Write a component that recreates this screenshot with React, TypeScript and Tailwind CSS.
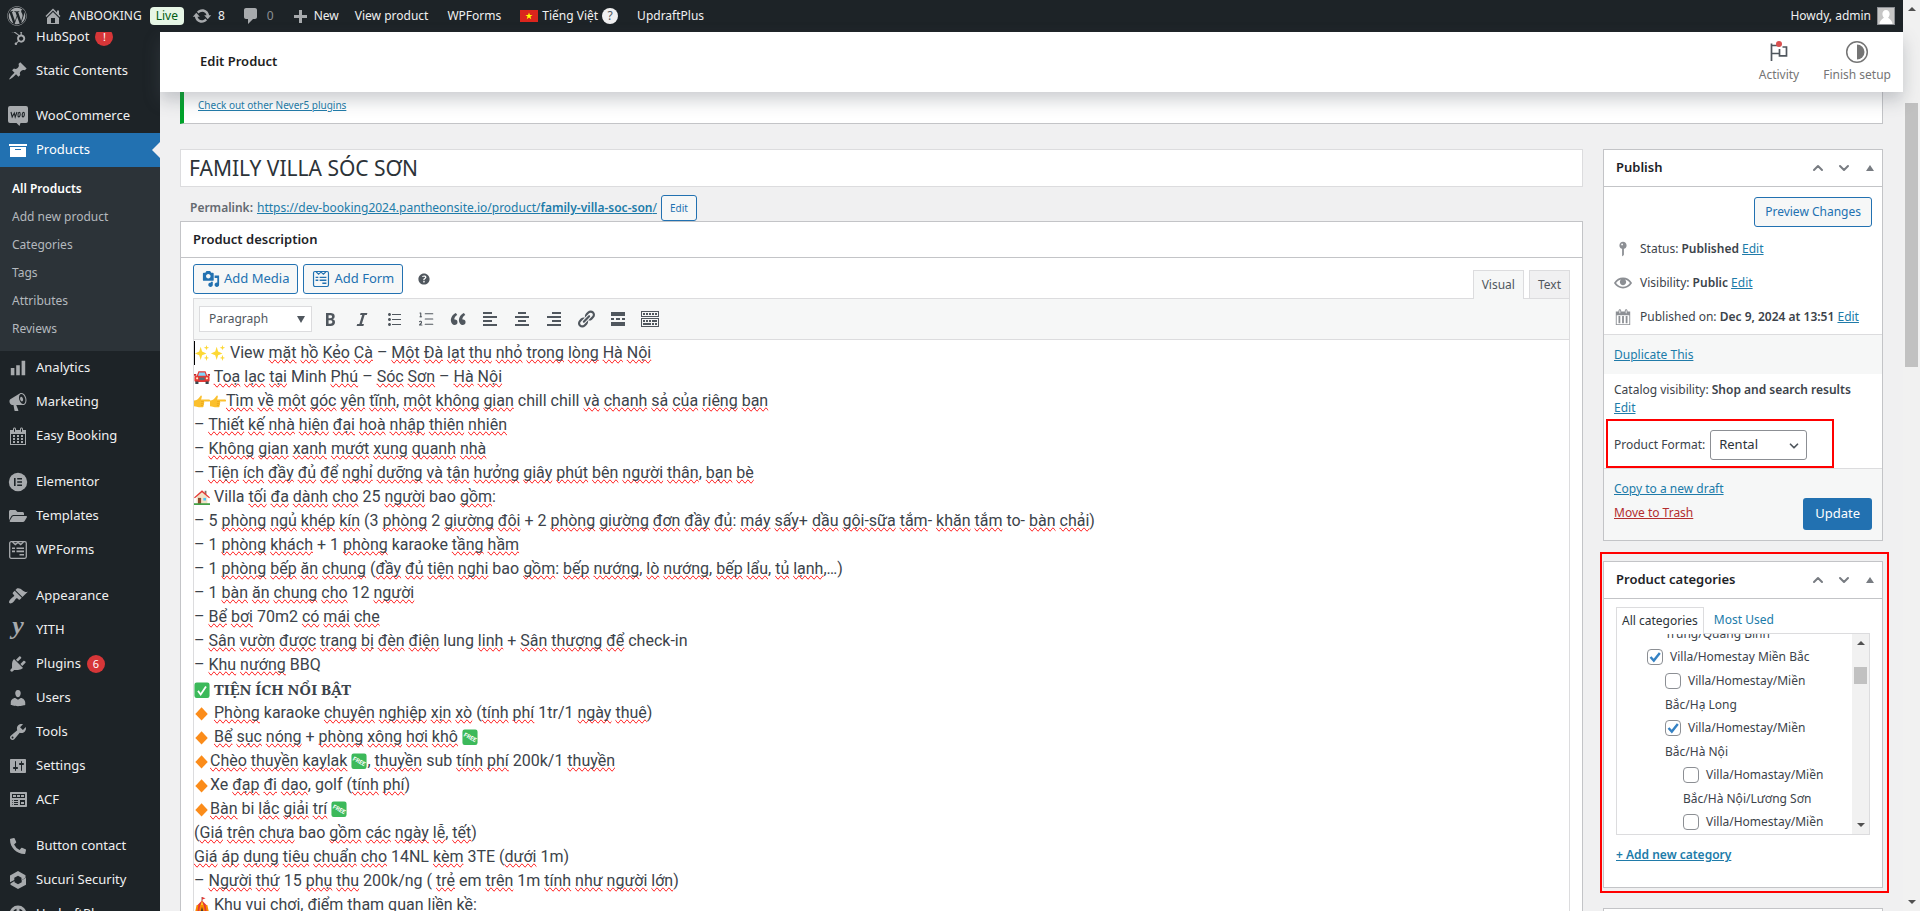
import React, { useState } from 'react';
import { FaWordpress, FaHubspot, FaFolderOpen, FaPhoneAlt } from 'react-icons/fa';
import { ChevronDown, ChevronUp, ListOrdered } from 'lucide-react';

const ICONS = {
  home: 'M16 8.5l1.53 1.53-1.06 1.06L10 4.6l-6.47 6.49-1.06-1.06L10 2.5l4 4v-2h2v4zm-6-2.46l6 5.99V18H4v-5.97zM12 17v-5H8v5h4z',
  update: 'M10.2 3.28c3.53 0 6.43 2.61 6.92 6h2.08l-3.5 4-3.5-4h2.32c-.45-1.97-2.21-3.45-4.32-3.45-1.45 0-2.73.71-3.54 1.78L4.95 5.66C6.23 4.2 8.11 3.28 10.2 3.28zm-.4 13.44c-3.52 0-6.43-2.61-6.92-6H.8l3.5-4c1.17 1.33 2.33 2.67 3.5 4H5.48c.45 1.97 2.21 3.45 4.32 3.45 1.45 0 2.73-.71 3.54-1.78l1.71 1.95c-1.28 1.46-3.15 2.38-5.25 2.38z',
  comments: 'M5 2h9c1.1 0 2 .9 2 2v7c0 1.1-.9 2-2 2h-2l-5 5v-5H5c-1.1 0-2-.9-2-2V4c0-1.1.9-2 2-2z',
  plus: 'M17 7v3h-5v5H9v-5H4V7h5V2h3v5h5z',
  pin: 'M10.44 3.02l1.82-1.82 6.36 6.35-1.83 1.82c-1.05-.68-2.48-.57-3.41.36l-.75.75c-.92.93-1.04 2.35-.35 3.41l-1.83 1.82-2.41-2.41-2.8 2.79c-.42.42-3.38 2.71-3.8 2.29s1.86-3.39 2.28-3.81l2.79-2.79L4.1 9.36l1.83-1.82c1.05.69 2.48.57 3.4-.36l.75-.75c.93-.92 1.05-2.35.36-3.41z',
  archive: 'M19 4v2H1V4h18zM2 7h16v10H2V7zm11 3V9H7v1h6z',
  chart: 'M18 18V2h-4v16h4zm-6 0V7H8v11h4zm-6 0v-8H2v8h4z',
  megaphone: 'M18.15 5.94c.46 1.62.38 3.22-.02 4.48-.42 1.28-1.26 2.18-2.3 2.48-.16.06-.26.06-.4.06-.06.02-.12.02-.18.02-.06.02-.14.02-.22.02h-6.8l2.22 5.5c.02.14-.06.26-.14.34-.08.1-.24.16-.34.16H6.95c-.1 0-.26-.06-.34-.16-.08-.08-.16-.2-.14-.34l-1-5.5H4.25l-.02-.02c-.5.06-1.08-.18-1.54-.62s-.88-1.08-1.06-1.88c-.24-.8-.2-1.56-.02-2.2.18-.62.58-1.08 1.06-1.3l.02-.02 9-5.4c.1-.06.18-.1.24-.16.06-.04.14-.08.24-.12.16-.08.28-.12.5-.18 1.04-.3 2.24.1 3.22.98s1.84 2.24 2.26 3.86zm-2.58 5.98h-.02c.4-.1.74-.34 1.04-.7.58-.7.86-1.76.86-3.04 0-.64-.1-1.3-.28-1.98-.34-1.36-1.02-2.5-1.78-3.24s-1.68-1.1-2.46-.88c-.82.22-1.4.96-1.7 2-.32 1.04-.28 2.36.06 3.72.38 1.36 1 2.5 1.8 3.24.78.74 1.62 1.1 2.48.88zm-2.54-7.08c.22-.04.42-.02.62.04.38.16.76.48 1.02 1s.42 1.2.42 1.78c0 .3-.04.56-.12.8-.18.48-.44.84-.86.94-.34.1-.8-.06-1.14-.4s-.64-.86-.78-1.5c-.18-.62-.12-1.24.02-1.72s.48-.84.82-.94z',
  calendar: 'M15 4h3v15H2V4h3V3c0-.41.15-.76.44-1.06.29-.29.65-.44 1.06-.44s.77.15 1.06.44c.29.3.44.65.44 1.06v1h4V3c0-.41.15-.76.44-1.06.29-.29.65-.44 1.06-.44s.77.15 1.06.44c.29.3.44.65.44 1.06v1zM6 3v2.5c0 .14.05.26.15.36.09.09.21.14.35.14s.26-.05.35-.14c.1-.1.15-.22.15-.36V3c0-.14-.05-.26-.15-.35-.09-.1-.21-.15-.35-.15s-.26.05-.35.15c-.1.09-.15.21-.15.35zm7 0v2.5c0 .14.05.26.14.36.1.09.22.14.36.14s.26-.05.36-.14c.09-.1.14-.22.14-.36V3c0-.14-.05-.26-.14-.35-.1-.1-.22-.15-.36-.15s-.26.05-.36.15c-.09.09-.14.21-.14.35zm4 15V8H3v10h14zM7 9v2H5V9h2zm2 0h2v2H9V9zm4 2V9h2v2h-2zm-6 1v2H5v-2h2zm2 0h2v2H9v-2zm4 2v-2h2v2h-2zm-6 1v2H5v-2h2zm4 2H9v-2h2v2zm4 0h-2v-2h2v2z',
  calendarBars: 'M15 4h3v15H2V4h3V3c0-.41.15-.76.44-1.06.29-.29.65-.44 1.06-.44s.77.15 1.06.44c.29.3.44.65.44 1.06v1h4V3c0-.41.15-.76.44-1.06.29-.29.65-.44 1.06-.44s.77.15 1.06.44c.29.3.44.65.44 1.06v1zM6 3v2.5c0 .14.05.26.15.36.09.09.21.14.35.14s.26-.05.35-.14c.1-.1.15-.22.15-.36V3c0-.14-.05-.26-.15-.35-.09-.1-.21-.15-.35-.15s-.26.05-.35.15c-.1.09-.15.21-.15.35zm7 0v2.5c0 .14.05.26.14.36.1.09.22.14.36.14s.26-.05.36-.14c.09-.1.14-.22.14-.36V3c0-.14-.05-.26-.14-.35-.1-.1-.22-.15-.36-.15s-.26.05-.36.15c-.09.09-.14.21-.14.35zm4 15V8H3v10h14zM7 9v8H5V9h2zm4 0v8H9V9h2zm4 0v8h-2V9h2z',
  appearance: 'M14.48 11.06L7.41 3.99l1.5-1.5c.5-.56 2.3-.47 3.51.32 1.21.8 1.43 1.28 2.91 2.1 1.18.64 2.45 1.26 4.45.85zm-.71.71L6.7 4.7 4.93 6.47c-.39.39-.39 1.02 0 1.41l1.06 1.06c.39.39.39 1.03 0 1.42-.6.6-1.43 1.11-2.21 1.69-.35.26-.7.53-1.01.84C1.43 14.23.4 16.08 1.4 17.07c.99 1 2.84-.03 4.18-1.36.31-.31.58-.66.85-1.02.57-.78 1.08-1.61 1.69-2.21.39-.39 1.02-.39 1.41 0l1.06 1.06c.39.39 1.02.39 1.41 0z',
  plugins: 'M13.11 4.36L9.87 7.6 8 5.73l3.24-3.24c.35-.34 1.05-.2 1.56.32.52.51.66 1.21.31 1.55zm-8 1.77l.91-1.12 9.01 9.01-1.19.84c-.71.71-2.63 1.16-3.82 1.16H6.14L4.9 17.26c-.59.59-1.54.59-2.12 0-.59-.58-.59-1.53 0-2.12l1.24-1.24v-3.88c0-1.13.4-3.19 1.09-3.89zm7.26 3.97l3.24-3.24c.34-.35 1.04-.21 1.55.31.52.51.66 1.21.31 1.55l-3.24 3.25z',
  users: 'M10 9.25c-2.27 0-2.73-3.44-2.73-3.44C7 4.02 7.82 2 9.97 2c2.16 0 2.98 2.02 2.71 3.81 0 0-.41 3.44-2.68 3.44zm0 2.57L12.72 10c2.39 0 4.52 2.33 4.52 4.53v2.49s-3.65 1.13-7.24 1.13c-3.65 0-7.24-1.13-7.24-1.13v-2.49c0-2.25 1.94-4.48 4.47-4.48z',
  tools: 'M16.68 9.77c-1.34 1.34-3.3 1.67-4.95.99l-5.41 6.52c-.99.99-2.59.99-3.58 0s-.99-2.59 0-3.57l6.52-5.42c-.68-1.65-.35-3.61.99-4.95 1.28-1.28 3.12-1.62 4.72-1.06l-2.89 2.89 2.82 2.82 2.86-2.87c.53 1.58.18 3.39-1.08 4.65zM3.81 16.21c.4.39 1.04.39 1.43 0 .4-.4.4-1.04 0-1.43-.39-.4-1.03-.4-1.43 0-.39.39-.39 1.03 0 1.43z',
  settings: 'M18 16V4c0-.55-.45-1-1-1H3c-.55 0-1 .45-1 1v12c0 .55.45 1 1 1h14c.55 0 1-.45 1-1zM8 11h1c.55 0 1 .45 1 1s-.45 1-1 1H8v1.5c0 .28-.22.5-.5.5s-.5-.22-.5-.5V13H6c-.55 0-1-.45-1-1s.45-1 1-1h1V5.5c0-.28.22-.5.5-.5s.5.22.5.5V11zm5-2h-1c-.55 0-1-.45-1-1s.45-1 1-1h1V5.5c0-.28.22-.5.5-.5s.5.22.5.5V7h1c.55 0 1 .45 1 1s-.45 1-1 1h-1v5.5c0 .28-.22.5-.5.5s-.5-.22-.5-.5V9z',
  widgets: 'M19 16V3c0-.55-.45-1-1-1H3c-.55 0-1 .45-1 1v13c0 .55.45 1 1 1h15c.55 0 1-.45 1-1zM4 4h13v4H4V4zm1 1v2h3V5H5zm4 0v2h3V5H9zm4 0v2h3V5h-3zm-8.5 5c.28 0 .5.22.5.5s-.22.5-.5.5-.5-.22-.5-.5.22-.5.5-.5zM6 10h4v1H6v-1zm6 0h5v5h-5v-5zm-7.5 2c.28 0 .5.22.5.5s-.22.5-.5.5-.5-.22-.5-.5.22-.5.5-.5zM6 12h4v1H6v-1zm7 0v2h3v-2h-3zm-8.5 2c.28 0 .5.22.5.5s-.22.5-.5.5-.5-.22-.5-.5.22-.5.5-.5zM6 14h4v1H6v-1z',
  media: 'M13 11V4c0-.55-.45-1-1-1h-1.67L9 1H5L3.67 3H2c-.55 0-1 .45-1 1v7c0 .55.45 1 1 1h10c.55 0 1-.45 1-1zM7 4.5c1.38 0 2.5 1.12 2.5 2.5S8.38 9.5 7 9.5 4.5 8.38 4.5 7 5.62 4.5 7 4.5zM14 6h5v10.5c0 1.38-1.12 2.5-2.5 2.5S14 17.88 14 16.5s1.12-2.5 2.5-2.5c.17 0 .34.02.5.05V9h-3V6zm-4 8.05V13h2v3.5c0 1.38-1.12 2.5-2.5 2.5S7 17.88 7 16.5 8.12 14 9.5 14c.17 0 .34.02.5.05z',
  help: 'M17 10c0-3.87-3.14-7-7-7-3.87 0-7 3.13-7 7s3.13 7 7 7c3.86 0 7-3.13 7-7zm-6.3 1.48H9.14v-.43c0-.38.08-.7.24-.98s.46-.57.88-.89c.41-.29.68-.53.81-.71.14-.18.2-.39.2-.62 0-.25-.09-.44-.28-.58-.19-.13-.45-.19-.79-.19-.58 0-1.25.19-2 .57l-.64-1.28c.87-.49 1.8-.74 2.77-.74.81 0 1.45.2 1.92.58.48.39.71.91.71 1.55 0 .43-.09.8-.29 1.11-.19.32-.57.67-1.11 1.06-.38.28-.61.49-.71.63-.1.15-.15.34-.15.57v.35zm-1.47 2.74c-.18-.17-.27-.42-.27-.73 0-.33.08-.58.26-.75s.43-.25.77-.25c.32 0 .57.09.75.26s.27.42.27.74c0 .3-.09.55-.27.72-.18.18-.43.27-.75.27-.33 0-.58-.09-.76-.26z',
  bold: 'M6 4v13h4.54c1.37 0 2.46-.33 3.26-1 .8-.66 1.2-1.58 1.2-2.77 0-.84-.17-1.51-.51-2.01s-.9-.85-1.67-1.03v-.09c.57-.1 1.02-.4 1.36-.9s.51-1.13.51-1.91c0-1.14-.39-1.98-1.17-2.5C12.75 4.26 11.5 4 9.78 4H6zm2.57 5.15V6.26h1.36c.73 0 1.27.11 1.61.32.34.22.51.58.51 1.07 0 .54-.16.92-.47 1.15s-.82.35-1.51.35h-1.5zm0 2.19h1.6c1.44 0 2.16.53 2.16 1.61 0 .6-.17 1.05-.51 1.34s-.86.43-1.57.43H8.57v-3.38z',
  italic: 'M14.78 6h-2.13l-2.8 9h2.12l-.62 2H4.6l.62-2h2.14l2.8-9H8.03l.62-2h6.75z',
  ul: 'M5.5 7C4.67 7 4 6.33 4 5.5 4 4.68 4.67 4 5.5 4 6.32 4 7 4.68 7 5.5 7 6.33 6.32 7 5.5 7zM8 5h9v1H8V5zm-2.500 7c-.83 0-1.500-.67-1.500-1.500C4 9.680 4.670 9 5.500 9c.82 0 1.500.68 1.500 1.500 0 .83-.68 1.500-1.500 1.500zM8 10h9v1H8v-1zm-2.500 7c-.83 0-1.500-.67-1.500-1.500 0-.82.67-1.500 1.500-1.500.82 0 1.500.68 1.500 1.500 0 .83-.68 1.500-1.500 1.500zM8 15h9v1H8v-1z',
  quote: 'M9.49 13.22c0-.74-.2-1.38-.61-1.9-.62-.78-1.83-.88-2.53-.72-.29-1.65 1.11-3.75 2.92-4.65L7.88 4c-2.73 1.3-5.42 4.28-4.96 8.05C3.21 14.43 4.59 16 6.54 16c.85 0 1.56-.25 2.12-.75s.83-1.18.83-2.03zm8.05 0c0-.74-.2-1.38-.61-1.9-.63-.78-1.83-.88-2.53-.72-.29-1.65 1.11-3.75 2.92-4.65L15.93 4c-2.73 1.3-5.41 4.28-4.95 8.05.29 2.38 1.66 3.95 3.61 3.95.85 0 1.56-.25 2.12-.75s.83-1.18.83-2.03z',
  alignLeft: 'M12 5V3H3v2h9zm5 4V7H3v2h14zm-5 4v-2H3v2h9zm5 4v-2H3v2h14z',
  alignCenter: 'M14 5V3H6v2h8zm3 4V7H3v2h14zm-3 4v-2H6v2h8zm3 4v-2H3v2h14z',
  alignRight: 'M17 5V3H8v2h9zm0 4V7H3v2h14zm0 4v-2H8v2h9zm0 4v-2H3v2h14z',
  link: 'M17.74 2.76c1.68 1.69 1.68 4.41 0 6.1l-1.53 1.52c-1.12 1.12-2.7 1.47-4.14 1.09l2.62-2.61.76-.77.76-.76c.84-.84.84-2.2 0-3.04-.84-.85-2.2-.85-3.04 0l-.77.76-3.38 3.38c-.37-1.44-.02-3.02 1.1-4.14l1.52-1.53c1.69-1.68 4.42-1.68 6.1 0zM8.59 13.43l5.34-5.34c.42-.42.42-1.1 0-1.52-.44-.43-1.13-.39-1.53 0l-5.33 5.34c-.42.42-.42 1.1 0 1.52.44.43 1.13.39 1.52 0zm-.76 2.29l4.14-4.15c.38 1.44.03 3.02-1.09 4.14l-1.52 1.53c-1.69 1.68-4.41 1.68-6.1 0-1.68-1.68-1.68-4.42 0-6.1l1.53-1.52c1.12-1.12 2.7-1.47 4.14-1.1l-4.14 4.15c-.85.84-.85 2.2 0 3.05.84.84 2.2.84 3.04 0z',
  more: 'M17 7V3H3v4h14zM6 11V9H3v2h3zm6 0V9H8v2h4zm5 0V9h-3v2h3zm0 6v-4H3v4h14z',
  kitchenSink: 'M19 2v6H1V2h18zm-1 5V3H2v4h16zM5 4v2H3V4h2zm3 0v2H6V4h2zm3 0v2H9V4h2zm3 0v2h-2V4h2zm3 0v2h-2V4h2zm2 5v9H1V9h18zm-1 8v-7H2v7h16zM5 11v2H3v-2h2zm3 0v2H6v-2h2zm3 0v2H9v-2h2zm6 0v2h-5v-2h5zm-6 3v2H3v-2h8zm3 0v2h-2v-2h2zm3 0v2h-2v-2h2z',
  visibility: 'M19.7 9.4C17.7 6 14 3.9 10 3.9S2.3 6 .3 9.4L0 10l.3.6c2 3.4 5.7 5.5 9.7 5.5s7.7-2.1 9.7-5.5l.3-.6-.3-.6zM10 14.1c-3.1 0-6-1.6-7.7-4.1C3.6 8 5.7 6.6 8 6.1c-.9.6-1.5 1.7-1.5 2.9 0 1.9 1.6 3.5 3.5 3.5s3.5-1.6 3.5-3.5c0-1.2-.6-2.3-1.5-2.9 2.3.5 4.4 1.9 5.7 3.9-1.7 2.5-4.6 4.1-7.7 4.1z',
  status: 'M14 6c0 1.86-1.28 3.41-3 3.86V16c0 1-2 2-2 2V9.86c-1.72-.45-3-2-3-3.86 0-2.21 1.79-4 4-4s4 1.79 4 4zM8 5c0 .55.45 1 1 1s1-.45 1-1-.45-1-1-1-1 .45-1 1z',
};

type IconName = keyof typeof ICONS;

const Dashicon: React.FC<{ name: IconName; className?: string }> = ({ name, className = 'w-5 h-5' }) => (
  <svg viewBox="0 0 20 20" className={`shrink-0 ${className}`} fill="currentColor" aria-hidden="true">
    <path d={ICONS[name]} />
  </svg>
);

const FormIcon: React.FC<{ className?: string }> = ({ className = 'w-5 h-5' }) => (
  <svg viewBox="0 0 20 20" className={`shrink-0 ${className}`} fill="none" stroke="currentColor" strokeWidth="1.3" aria-hidden="true">
    <rect x="1.7" y="1.7" width="16.6" height="16.6" rx="1.5" />
    <path d="M4.5 2l2.8 2.6L10 2.4l2.7 2.2L15.5 2" />
    <path d="M4 8.2h3M8.5 8.2H16M4 11.4h3M8.5 11.4H16M11.5 14.8H16" strokeWidth="1.6" />
  </svg>
);

const WooIcon = () => (
  <svg viewBox="0 0 20 20" className="w-5 h-5 shrink-0" aria-hidden="true">
    <path d="M2 0h16a2 2 0 0 1 2 2v13a2 2 0 0 1-2 2h-5.5l-1 3-3-3H2a2 2 0 0 1-2-2V2a2 2 0 0 1 2-2z" fill="#a7aaad" />
    <path d="M3 6l1.2 5L6.3 7l.9 4L9 6M11.3 6.3c-1.4 0-1.9 4.4-.5 4.6s2-4.4.5-4.6zM15.500 6.300c-1.400 0-1.900 4.400-.5 4.600s2-4.400.5-4.600z" fill="none" stroke="#1d2327" strokeWidth="1.1" />
  </svg>
);

const ElementorIcon = () => (
  <svg viewBox="0 0 20 20" className="w-5 h-5 shrink-0" aria-hidden="true">
    <circle cx="10" cy="10" r="9.2" fill="currentColor" />
    <path d="M6 6h1.6v8H6zM9.2 6H14v1.6H9.2zM9.2 9.2H14v1.6H9.2zM9.2 12.4H14V14H9.2z" fill="#1d2327" />
  </svg>
);

const SucuriIcon = () => (
  <svg viewBox="0 0 20 20" className="w-5 h-5 shrink-0" fill="currentColor" aria-hidden="true">
    <path d="M10 1l7.5 4.200v2.600l-4 2.400V7.700L10 5.800 6.300 7.700v2.200L2 12.300V5.500z" />
    <path d="M10 19l-7.500-4.200v-1.300l4-2.500v1.300l3.500 1.900 3.700-1.900v-2l4.300-2.500v6.900z" />
  </svg>
);

const UpdraftIcon = () => (
  <svg viewBox="0 0 20 20" className="w-5 h-5 shrink-0" fill="none" stroke="currentColor" aria-hidden="true">
    <circle cx="10" cy="10" r="7" strokeWidth="3" />
    <path d="M10 4v7h6" strokeWidth="3" />
  </svg>
);

// Little drawings that stand inline in the description text
const EMOJI: Record<string, React.ReactNode> = {
  spark: (
    <g fill="#fdd835">
      <path d="M7.5 3l1.6 5.4 4.900 2.100-4.900 2L7.500 18l-1.600-5.500L1 10.500l4.900-2.100z" />
      <path d="M14 1l.7 2.300L17 4l-2.300.8L14 7l-.7-2.200L11 4l2.300-.7zM14 12l.8 2.700 2.200.8-2.200.8L14 19l-.8-2.700-2.200-.8 2.200-.8z" />
    </g>
  ),
  car: (
    <g>
      <path d="M5 3.500h8l2 5.500H3z" fill="#e53935" />
      <path d="M5.800 4.800h6.400l1.200 4H4.600z" fill="#81d4fa" />
      <path d="M0 6.500h2.500V8.500H0zM15.500 6.500H18V8.500h-2.500z" fill="#c62828" />
      <rect x=".5" y="8.500" width="17" height="7" rx="1.500" fill="#e53935" />
      <path d="M1.500 15H5v3H1.500zM13 15h3.500v3H13z" fill="#37474f" />
      <circle cx="3.500" cy="11.500" r="1.200" fill="#fff3c4" />
      <circle cx="14.500" cy="11.500" r="1.200" fill="#fff3c4" />
      <path d="M6 10.500h6v3H6z" fill="#546e7a" />
    </g>
  ),
  hand: (
    <g>
      <path d="M0 9.500C3 9 4 8 5.500 6.500L7.500 4c1.200-.4 1.600.8 1.200 1.700L8 8.200h9c1.500 0 1.500 2.300 0 2.300h-6c.8.8.8 1.700 0 2.200.6.800.5 1.700-.3 2.100.4.900 0 1.700-.9 2.200H5.500C3.500 17 3 16 0 16z" fill="#fbc02d" />
      <path d="M8 10.700h3M7.700 13h3M7.700 15h2.500" stroke="#e59b12" strokeWidth=".7" />
    </g>
  ),
  house: (
    <g>
      <path d="M3 9l6-5 6 5v9H3z" fill="#f3e3c8" />
      <path d="M12 3h2v4h-2z" fill="#8d6e63" />
      <path d="M0 10.500L9 2.500l9 8-1 1L9 4.600l-8 6.900z" fill="#e53935" />
      <path d="M4.500 11H8v7H4.500z" fill="#8d4b2e" />
      <path d="M10.500 11h3v3h-3z" fill="#4fc3f7" />
      <path d="M0 17h18v2H0z" fill="#43a047" />
    </g>
  ),
  check: (
    <g>
      <rect x=".5" y="1.500" width="17" height="17.500" rx="2.500" fill="#3cb95a" />
      <path d="M4.500 11l3 4L13.500 6" fill="none" stroke="#fff" strokeWidth="2" />
    </g>
  ),
  diamond: <path d="M8.500 3.500l7 7.500-7 7.500-7-7.500z" fill="#fb8c1a" />,
  free: (
    <g>
      <rect x=".5" y="1.500" width="17" height="17.500" rx="2.500" fill="#3cb95a" />
      <text x="2" y="9" fontSize="6.500" fontFamily="Roboto" fontWeight="700" fill="#fff" transform="rotate(28 2 8)">FREE</text>
    </g>
  ),
  tent: (
    <g>
      <path d="M9 1v5" stroke="#795548" />
      <path d="M9 1l4 1.300L9 4z" fill="#e53935" />
      <path d="M9 5l5 5H4z" fill="#e53935" />
      <path d="M9 5l1.500 5h-3z" fill="#ffca28" />
      <path d="M3 10h12l2 9H1z" fill="#fb8c00" />
      <path d="M5 10h2l-1.500 9h-2zM11 10h2l1.500 9h-2z" fill="#e53935" />
      <path d="M9 12l2 7H7z" fill="#4e342e" />
    </g>
  ),
};

// [word] carries a spell check mark, {name} is one of the drawings above
const DESCRIPTION = [
  '{spark}{spark} View [mặt] [hồ] [Kẻo] [Cà] – [Một] [Đà] [lạt] [thu] [nhỏ] [trong] [lòng] [Hà] [Nội]',
  '{car} [Toạ] [lạc] [tại] Minh [Phú] – [Sóc] [Sơn] – [Hà] [Nội]',
  '{hand}{hand}[Tìm] [về] [một] [góc] [yên] [tĩnh], [một] [không] [gian] chill chill [và] [chanh] [sả] [của] [riêng] [bạn]',
  '– [Thiết] [kế] [nhà] [hiện] [đại] [hoà] [nhập] [thiên] [nhiên]',
  '– [Không] [gian] [xanh] [mướt] [xung] [quanh] [nhà]',
  '– [Tiện] [ích] [đầy] [đủ] [để] [nghỉ] [dưỡng] [và] [tận] [hưởng] [giây] [phút] [bên] [người] [thân], [bạn] [bè]',
  '{house} Villa [tối] [đa] [dành] [cho] 25 [người] bao [gồm]:',
  '– 5 [phòng] [ngủ] [khép] [kín] (3 [phòng] 2 [giường] [đôi] + 2 [phòng] [giường] [đơn] [đầy] [đủ]: [máy] [sấy]+ [dầu] [gội-sữa] [tắm]- [khăn] [tắm] to- [bàn] [chải])',
  '– 1 [phòng] [khách] + 1 [phòng] karaoke [tầng] [hầm]',
  '– 1 [phòng] [bếp] [ăn] [chung] ([đầy] [đủ] [tiện] [nghi] bao [gồm]: [bếp] [nướng], [lò] [nướng], [bếp] [lẩu], [tủ] [lạnh],…)',
  '– 1 [bàn] [ăn] [chung] [cho] 12 [người]',
  '– [Bể] [bơi] 70m2 [có] [mái] [che]',
  '– [Sân] [vườn] [được] [trang] [bị] [đèn] [điện] lung [linh] + [Sân] [thượng] [để] check-in',
  '– [Khu] [nướng] BBQ',
  '{check} *TIỆN ÍCH NỔI BẬT*',
  '{diamond} [Phòng] karaoke [chuyên] [nghiệp] [xịn] [xò] ([tính] [phí] 1tr/1 [ngày] [thuê])',
  '{diamond} [Bể] [sục] [nóng] + [phòng] [xông] [hơi] [khô] {free}',
  '{diamond}[Chèo] [thuyền] [kaylak] {free}, [thuyền] sub [tính] [phí] 200k/1 [thuyền]',
  '{diamond}Xe [đạp] [đi] [dạo], golf ([tính] [phí])',
  '{diamond}[Bàn] bi [lắc] [giải] [trí] {free}',
  '([Giá] [trên] [chưa] bao [gồm] [các] [ngày] [lễ], [tết])',
  '[Giá] [áp] [dụng] [tiêu] [chuẩn] [cho] 14NL [kèm] 3TE ([dưới] 1m)',
  '– [Người] [thứ] 15 [phụ] [thu] 200k/ng ( [trẻ] em [trên] 1m [tính] [như] [người] [lớn])',
  '{tent} [Khu] [vui] [chơi], [điểm] [tham] [quan] [liền] [kề]:',
];

const DescriptionLine: React.FC<{ text: string }> = ({ text }) => (
  <p className="h-6 whitespace-nowrap">
    {text.split(/(\[[^\]]+\]|\{[a-z]+\}|\*[^*]+\*)/).map((part, i) => {
      if (part.startsWith('[')) {
        return <span key={i} className="[text-decoration-line:spelling-error]">{part.slice(1, -1)}</span>;
      }
      if (part.startsWith('{')) {
        return (
          <svg key={i} viewBox="0 0 18 20" className="inline-block w-4 h-[18px] align-[-4px]" aria-hidden="true">
            {EMOJI[part.slice(1, -1)]}
          </svg>
        );
      }
      if (part.startsWith('*')) {
        return <strong key={i} className="font-['Noto_Serif','Liberation_Serif',serif] text-[15px]">{part.slice(1, -1)}</strong>;
      }
      return part;
    })}
  </p>
);

type MenuItem = { label: string; icon: React.ReactNode; badge?: string };

const MENU_TOP: MenuItem[][] = [
  [
    { label: 'HubSpot', icon: <FaHubspot className="w-4 h-4" />, badge: '!' },
    { label: 'Static Contents', icon: <Dashicon name="pin" /> },
  ],
  [{ label: 'WooCommerce', icon: <WooIcon /> }],
];

const SUBMENU = ['All Products', 'Add new product', 'Categories', 'Tags', 'Attributes', 'Reviews'];

const MENU_BOTTOM: MenuItem[][] = [
  [
    { label: 'Analytics', icon: <Dashicon name="chart" className="w-[18px] h-[18px]" /> },
    { label: 'Marketing', icon: <Dashicon name="megaphone" /> },
    { label: 'Easy Booking', icon: <Dashicon name="calendar" /> },
  ],
  [
    { label: 'Elementor', icon: <ElementorIcon /> },
    { label: 'Templates', icon: <FaFolderOpen className="w-[18px] h-4" /> },
    { label: 'WPForms', icon: <FormIcon /> },
  ],
  [
    { label: 'Appearance', icon: <Dashicon name="appearance" /> },
    { label: 'YITH', icon: <span className="font-['Liberation_Serif',serif] text-[26px] leading-5 font-bold italic -mt-2">y</span> },
    { label: 'Plugins', icon: <Dashicon name="plugins" />, badge: '6' },
    { label: 'Users', icon: <Dashicon name="users" /> },
    { label: 'Tools', icon: <Dashicon name="tools" /> },
    { label: 'Settings', icon: <Dashicon name="settings" /> },
    { label: 'ACF', icon: <Dashicon name="widgets" /> },
  ],
  [
    { label: 'Button contact', icon: <FaPhoneAlt className="w-4 h-4" /> },
    { label: 'Sucuri Security', icon: <SucuriIcon /> },
    { label: 'UpdraftPlus', icon: <UpdraftIcon /> },
  ],
];

const MenuGroup: React.FC<{ items: MenuItem[] }> = ({ items }) => (
  <ul>
    {items.map((item) => (
      <li key={item.label}>
        <a href="#" className="flex items-center h-[34px] text-[#f0f0f1] hover:text-[#72aee6]">
          <span className="w-9 flex items-center justify-center text-[#a7aaad]">{item.icon}</span>
          {item.label}
          {item.badge && (
            <span className="ml-1.5 w-[18px] h-[18px] rounded-full bg-[#d63638] text-white text-[11px] leading-[18px] text-center">{item.badge}</span>
          )}
        </a>
      </li>
    ))}
  </ul>
);

const Sidebar = () => (
  <aside className="w-40 shrink-0 bg-[#1d2327] overflow-hidden text-[13px]">
    <nav className="-mt-3" aria-label="Main menu">
      <div className="flex flex-col gap-[11px]">
        {MENU_TOP.map((group, i) => <MenuGroup key={i} items={group} />)}
      </div>
      <a href="#" className="relative flex items-center h-[34px] bg-[#2271b1] text-white">
        <span className="w-9 flex justify-center"><Dashicon name="archive" /></span>
        Products
        <span className="absolute right-0 top-[9px] border-y-8 border-r-8 border-y-transparent border-r-[#f0f0f1]"></span>
      </a>
      <ul className="bg-[#2c3338] py-2 pl-3 text-[12px]">
        {SUBMENU.map((label, i) => (
          <li key={label}>
            <a href="#" className={`block leading-7 ${i === 0 ? 'text-white font-semibold' : 'text-[#b4b9be]'}`}>{label}</a>
          </li>
        ))}
      </ul>
      <div className="flex flex-col gap-3">
        {MENU_BOTTOM.map((group, i) => <MenuGroup key={i} items={group} />)}
      </div>
    </nav>
  </aside>
);

const AdminBar = () => (
  <div className="h-8 shrink-0 bg-[#1d2327] text-[#f0f0f1] flex items-center justify-between pl-[7px] pr-2">
    <div className="flex items-center gap-4">
      <a href="#" aria-label="About WordPress"><FaWordpress className="w-5 h-5 text-[#a7aaad]" /></a>
      <div className="flex items-center gap-2">
        <a href="#" className="flex items-center gap-1.5"><Dashicon name="home" className="w-5 h-5 text-[#a7aaad]" />ANBOOKING</a>
        <span className="bg-[#e6f6e6] text-[#005c12] px-1.5 leading-[18px] rounded-sm">Live</span>
        <a href="#" className="flex items-center gap-1.5"><Dashicon name="update" className="w-5 h-5 text-[#a7aaad]" />8</a>
      </div>
      <a href="#" className="flex items-center gap-1.5 text-[#8c8f94]"><Dashicon name="comments" className="w-5 h-5 text-[#a7aaad]" />0</a>
      <a href="#" className="flex items-center gap-1"><Dashicon name="plus" className="w-5 h-5 mt-1 text-[#a7aaad]" />New</a>
      <div className="flex items-center gap-[19px]">
        <a href="#">View product</a>
        <a href="#">WPForms</a>
        <a href="#" className="flex items-center gap-1">
          <svg viewBox="0 0 18 12" className="w-[18px] h-3" aria-hidden="true">
            <path d="M0 0h18v12H0z" fill="#da251d" />
            <path d="M9 2.4l.9 2.6h2.7l-2.2 1.6.9 2.6L9 7.6 6.7 9.2l.9-2.600L5.400 5h2.700z" fill="#ff0" />
          </svg>
          Tiếng Việt
          <span className="w-4 h-4 rounded-full bg-[#f0f0f1] text-[#50575e] leading-4 text-center">?</span>
        </a>
        <a href="#">UpdraftPlus</a>
      </div>
    </div>
    <a href="#" className="flex items-center gap-1.5">
      Howdy, admin
      <svg viewBox="0 0 18 18" className="w-[18px] h-[18px]" aria-hidden="true">
        <path d="M0 0h18v18H0z" fill="#8c8f94" />
        <path d="M1 1h16v16H1z" fill="#c6c6c6" />
        <path d="M9 3c2.3 0 3.6 1.7 3.6 4 0 1.6-.7 2.8-1.5 3.6.2 1.200 3.900 1.800 4.400 6.400h-13c.5-4.600 4.200-5.200 4.400-6.400C6.100 9.800 5.400 8.600 5.400 7c0-2.300 1.300-4 3.600-4z" fill="#fff" />
      </svg>
    </a>
  </div>
);

const PageHeader = () => (
  <header className="relative z-10 h-[60px] shrink-0 bg-white shadow-[0_8px_16px_rgba(85,93,102,0.3)] flex items-center justify-between pl-10 pr-3">
    <h1 className="text-[13px] font-semibold text-[#1e1e1e]">Edit Product</h1>
    <div className="flex gap-6 text-[12px] text-[#757575]">
      <button type="button" className="flex flex-col items-center gap-0.5">
        <svg viewBox="0 0 24 24" className="w-6 h-6" fill="none" stroke="#50575e" strokeWidth="1.7" aria-hidden="true">
          <path d="M4.500 3.500V21M4.500 5.500h8M4.500 13.500h8v2.300h7V7h-4M12.500 13.500V9" />
          <circle cx="12" cy="4" r="3" fill="#d94f4f" stroke="none" />
        </svg>
        Activity
      </button>
      <button type="button" className="flex flex-col items-center gap-0.5">
        <svg viewBox="0 0 24 24" className="w-6 h-6" aria-hidden="true">
          <circle cx="12" cy="12" r="10.3" fill="none" stroke="#757575" strokeWidth="1.5" />
          <path d="M12 4.500a7.500 7.500 0 0 1 0 15z" fill="#757575" />
        </svg>
        Finish setup
      </button>
    </div>
  </header>
);

const PanelHeader: React.FC<{ title: string }> = ({ title }) => (
  <div className="h-[37px] border-b border-[#c3c4c7] flex items-center justify-between pl-3 pr-1">
    <h2 className="text-[13px] font-semibold text-[#1d2327]">{title}</h2>
    <div className="flex items-center gap-2.5 text-[#787c82]">
      <button type="button" aria-label="Move up"><ChevronUp className="w-4 h-4" strokeWidth={3} /></button>
      <button type="button" aria-label="Move down"><ChevronDown className="w-4 h-4" strokeWidth={3} /></button>
      <button type="button" aria-label="Toggle panel" className="w-4 flex justify-center">
        <span className="border-x-4 border-b-[6px] border-x-transparent border-b-[#787c82]"></span>
      </button>
    </div>
  </div>
);

const EditLink = () => <a href="#" className="text-[#207ba9] underline">Edit</a>;

const PublishPanel = () => (
  <section className="bg-white border border-[#c3c4c7]">
    <PanelHeader title="Publish" />
    <div className="px-2.5 pt-2.5 flex justify-end">
      <button type="button" className="h-[30px] px-2.5 rounded-[3px] border border-[#2271b1] bg-[#f6f7f7] text-[#2271b1]">Preview Changes</button>
    </div>
    <ul className="pt-[5px] px-2.5">
      <li className="h-[34px] flex items-center">
        <Dashicon name="status" className="w-[18px] h-[18px] mr-2 text-[#8c8f94]" />
        <span>Status: <b className="font-semibold">Published</b> <EditLink /></span>
      </li>
      <li className="h-[34px] flex items-center">
        <Dashicon name="visibility" className="w-[18px] h-[18px] mr-2 text-[#8c8f94]" />
        <span>Visibility: <b className="font-semibold">Public</b> <EditLink /></span>
      </li>
      <li className="h-[34px] flex items-center">
        <Dashicon name="calendarBars" className="w-[18px] h-[18px] mr-2 text-[#8c8f94]" />
        <span>Published on: <b className="font-semibold">Dec 9, 2024 at 13:51</b> <EditLink /></span>
      </li>
    </ul>
    <div className="h-10 border-t border-[#dcdcde] bg-[#f6f7f7] px-2.5 flex items-center">
      <a href="#" className="text-[#207ba9] underline">Duplicate This</a>
    </div>
    <div className="px-2.5 pt-[7px] pb-0.5 leading-[18px]">
      Catalog visibility: <b className="font-semibold">Shop and search results</b> <EditLink />
    </div>
    <div className="relative px-2.5 pt-[11px] pb-2 flex items-center">
      <label htmlFor="product-format">Product Format:</label>
      <div className="relative ml-[5px] w-[97px]">
        <select id="product-format" className="appearance-none w-full h-[30px] pl-2 pr-6 rounded-[3px] border border-[#8c8f94] bg-white text-[13px] text-[#2c3338]">
          <option>Rental</option>
          <option>Standard</option>
        </select>
        <ChevronDown className="absolute right-1.5 top-[9px] w-3.5 h-3.5 text-[#50575e] pointer-events-none" strokeWidth={3} />
      </div>
      <div className="absolute inset-y-0 left-0.5 right-12 border-2 border-[#f00] pointer-events-none"></div>
    </div>
    <div className="border-t border-[#dcdcde] bg-[#f6f7f7] p-2.5 flex items-end justify-between">
      <div className="flex flex-col items-start gap-1 self-start leading-5">
        <a href="#" className="text-[#207ba9] underline">Copy to a new draft</a>
        <a href="#" className="text-[#b32d2e] underline">Move to Trash</a>
      </div>
      <button type="button" className="h-8 mt-[19px] px-3 rounded-[3px] bg-[#2271b1] text-white text-[13px]">Update</button>
    </div>
  </section>
);

type Category = { id: string; lines: string[]; indent: string; checked: boolean };

const CATEGORIES: Category[] = [
  { id: 'bac', lines: ['Villa/Homestay Miền Bắc'], indent: 'pl-[30px]', checked: true },
  { id: 'ha-long', lines: ['Villa/Homestay/Miền', 'Bắc/Hạ Long'], indent: 'pl-12', checked: false },
  { id: 'ha-noi', lines: ['Villa/Homestay/Miền', 'Bắc/Hà Nội'], indent: 'pl-12', checked: true },
  { id: 'luong-son', lines: ['Villa/Homastay/Miền', 'Bắc/Hà Nội/Lương Sơn'], indent: 'pl-[66px]', checked: false },
  { id: 'soc-son', lines: ['Villa/Homestay/Miền'], indent: 'pl-[66px]', checked: false },
];

const CategoriesPanel = () => {
  const [checked, setChecked] = useState<Record<string, boolean>>(
    Object.fromEntries(CATEGORIES.map((c) => [c.id, c.checked]))
  );

  return (
    <section className="relative bg-white border border-[#c3c4c7]">
      <PanelHeader title="Product categories" />
      <div className="px-3 pt-2 pb-[22px]">
        <div className="flex">
          <button type="button" className="relative z-10 -mb-px h-[27px] px-[5px] border border-b-0 border-[#dcdcde] bg-white text-[#2c3338]">All categories</button>
          <button type="button" className="px-2.5 text-[#207ba9]">Most Used</button>
        </div>
        <div className="flex h-[202px] border border-[#dcdcde]">
          <ul className="flex-1 overflow-hidden">
            <li className="-mt-3 pl-12 leading-[23px]">Trung/Quảng Bình</li>
            {CATEGORIES.map((c) => (
              <li key={c.id} className={c.indent}>
                <label className="block whitespace-nowrap">
                  <span className="flex items-center h-6 gap-[7px]">
                    <span className="relative w-4 h-4">
                      <input
                        type="checkbox"
                        checked={checked[c.id]}
                        onChange={() => setChecked({ ...checked, [c.id]: !checked[c.id] })}
                        className="block appearance-none w-4 h-4 rounded border border-[#8c8f94] bg-white"
                      />
                      {checked[c.id] && (
                        <svg viewBox="0 0 16 16" className="absolute inset-0 pointer-events-none" aria-hidden="true">
                          <path d="M3.5 8l3.3 3.600L12.800 4" fill="none" stroke="#3582c4" strokeWidth="2.4" />
                        </svg>
                      )}
                    </span>
                    {c.lines[0]}
                  </span>
                  {c.lines[1] && <span className="block leading-[23px]">{c.lines[1]}</span>}
                </label>
              </li>
            ))}
          </ul>
          <div className="w-[17px] bg-[#f1f1f1] flex flex-col items-center py-[7px]" aria-hidden="true">
            <span className="border-x-4 border-b-4 border-x-transparent border-b-[#505050]"></span>
            <span className="mt-[22px] w-[13px] h-[17px] bg-[#c1c1c1]"></span>
            <span className="mt-auto border-x-4 border-t-4 border-x-transparent border-t-[#505050]"></span>
          </div>
        </div>
        <a href="#" className="inline-block mt-2.5 leading-5 font-semibold text-[#207ba9] underline">+ Add new category</a>
      </div>
      <div className="absolute -top-2.5 -bottom-1.5 -left-1 -right-[7px] border-2 border-[#f00] pointer-events-none"></div>
    </section>
  );
};

const TOOLBAR: { label: string; icon: React.ReactNode }[] = [
  { label: 'Bold', icon: <Dashicon name="bold" /> },
  { label: 'Italic', icon: <Dashicon name="italic" /> },
  { label: 'Bulleted list', icon: <Dashicon name="ul" /> },
  { label: 'Numbered list', icon: <ListOrdered className="w-[18px] h-[18px]" strokeWidth={1.5} /> },
  { label: 'Blockquote', icon: <Dashicon name="quote" /> },
  { label: 'Align left', icon: <Dashicon name="alignLeft" /> },
  { label: 'Align center', icon: <Dashicon name="alignCenter" /> },
  { label: 'Align right', icon: <Dashicon name="alignRight" /> },
  { label: 'Insert link', icon: <Dashicon name="link" /> },
  { label: 'Read more', icon: <Dashicon name="more" /> },
  { label: 'Toolbar toggle', icon: <Dashicon name="kitchenSink" /> },
];

const Editor = () => (
  <section className="flex-1 flex flex-col bg-white border border-[#c3c4c7]">
    <div className="h-9 shrink-0 border-b border-[#c3c4c7] flex items-center px-3">
      <h2 className="text-[13px] font-semibold text-[#1d2327]">Product description</h2>
    </div>
    <div className="px-3 pt-1.5 flex-1 flex flex-col">
      <div className="flex items-start justify-between">
        <div className="flex items-center gap-[5px] text-[13px]">
          <button type="button" className="h-[30px] px-2 flex items-center gap-1 rounded-[3px] border border-[#2271b1] bg-[#f6f7f7] text-[#2271b1]">
            <Dashicon name="media" className="w-[18px] h-[18px]" />Add Media
          </button>
          <button type="button" className="h-[30px] px-2 flex items-center gap-1 rounded-[3px] border border-[#2271b1] bg-[#f6f7f7] text-[#2271b1]">
            <FormIcon className="w-[18px] h-[18px]" />Add Form
          </button>
          <Dashicon name="help" className="w-4 h-4 ml-2 text-[#50575e]" />
        </div>
        <div className="flex gap-[5px] pt-1.5 text-[#50575e]">
          <button type="button" className="relative z-10 h-[29px] -mb-px px-2 border border-b-0 border-[#dcdcde] bg-[#f6f7f7]">Visual</button>
          <button type="button" className="h-7 px-2 border border-b-0 border-[#dcdcde] bg-[#f0f0f1]">Text</button>
        </div>
      </div>
      <div className="flex-1 border-x border-t border-[#dcdcde]">
        <div className="h-[41px] bg-[#f6f7f7] border-b border-[#dcdcde] flex items-center pl-[5px]">
          <div className="relative mr-0.5">
            <select aria-label="Paragraph format" className="appearance-none w-[113px] h-[26px] pl-[9px] border border-[#dcdcde] bg-white text-[12px] text-[#50575e]">
              <option>Paragraph</option>
              <option>Heading 1</option>
            </select>
            <span className="absolute right-[7px] top-[10px] border-x-4 border-t-[7px] border-x-transparent border-t-[#50575e] pointer-events-none"></span>
          </div>
          {TOOLBAR.map((tool) => (
            <button key={tool.label} type="button" aria-label={tool.label} className="w-8 h-7 flex items-center justify-center text-[#50575e]">
              {tool.icon}
            </button>
          ))}
        </div>
        <div
          className="pt-px font-['Roboto',sans-serif] text-[16px] leading-6 text-[#3c434a] outline-none"
          role="textbox"
          aria-multiline="true"
          aria-label="Product description"
        >
          <div className="relative">
            <span className="absolute left-0 top-0 w-px h-6 bg-black"></span>
            {DESCRIPTION.map((line, i) => <DescriptionLine key={i} text={line} />)}
          </div>
        </div>
      </div>
    </div>
  </section>
);

export default function App() {
  const [title, setTitle] = useState('FAMILY VILLA SÓC SƠN');

  return (
    <div className="h-screen flex overflow-hidden bg-[#f0f0f1] font-['Noto_Sans','Open_Sans',sans-serif] text-[12px] text-[#3c434a]">
      <div className="flex-1 min-w-0 flex flex-col">
        <AdminBar />
        <div className="flex-1 min-h-0 flex">
          <Sidebar />
          <div className="flex-1 min-w-0 flex flex-col">
            <PageHeader />
            <main className="flex-1 min-h-0 overflow-hidden px-5">
              <div className="h-8 bg-white border border-t-0 border-l-4 border-[#c3c4c7] border-l-[#00a32a] pl-3.5 pt-1 text-[10px] leading-[18px]">
                <a href="#" className="text-[#207ba9] underline">Check out other Never5 plugins</a>
              </div>
              <div className="mt-[25px] grid grid-cols-[minmax(0,1fr)_280px] gap-5">
                <div className="flex flex-col">
                  <input
                    aria-label="Product name"
                    value={title}
                    onChange={(e) => setTitle(e.target.value)}
                    className="w-full h-[38px] px-2 bg-white border border-[#dcdcde] text-[21px] text-[#2c3338] outline-none"
                  />
                  <div className="h-[34px] flex items-center gap-1 pt-2 pl-2.5">
                    <strong className="font-semibold text-[#646970]">Permalink:</strong>
                    <a href="#" className="text-[#207ba9] underline">
                      https://dev-booking2024.pantheonsite.io/product/<b className="font-semibold">family-villa-soc-son</b>/
                    </a>
                    <button type="button" className="h-[26px] px-2 rounded-[3px] border border-[#2271b1] bg-[#f6f7f7] text-[10px] text-[#2271b1]">Edit</button>
                  </div>
                  <Editor />
                </div>
                <div className="flex flex-col gap-5">
                  <PublishPanel />
                  <CategoriesPanel />
                  <section className="bg-white border border-[#c3c4c7]">
                    <PanelHeader title="Product tags" />
                  </section>
                </div>
              </div>
            </main>
          </div>
        </div>
      </div>
      <div className="w-[17px] bg-[#f1f1f1] flex flex-col items-center py-[7px]" aria-hidden="true">
        <span className="border-x-4 border-b-4 border-x-transparent border-b-[#505050]"></span>
        <span className="mt-[92px] w-[13px] h-[264px] bg-[#c1c1c1]"></span>
        <span className="mt-auto border-x-4 border-t-4 border-x-transparent border-t-[#505050]"></span>
      </div>
    </div>
  );
}
